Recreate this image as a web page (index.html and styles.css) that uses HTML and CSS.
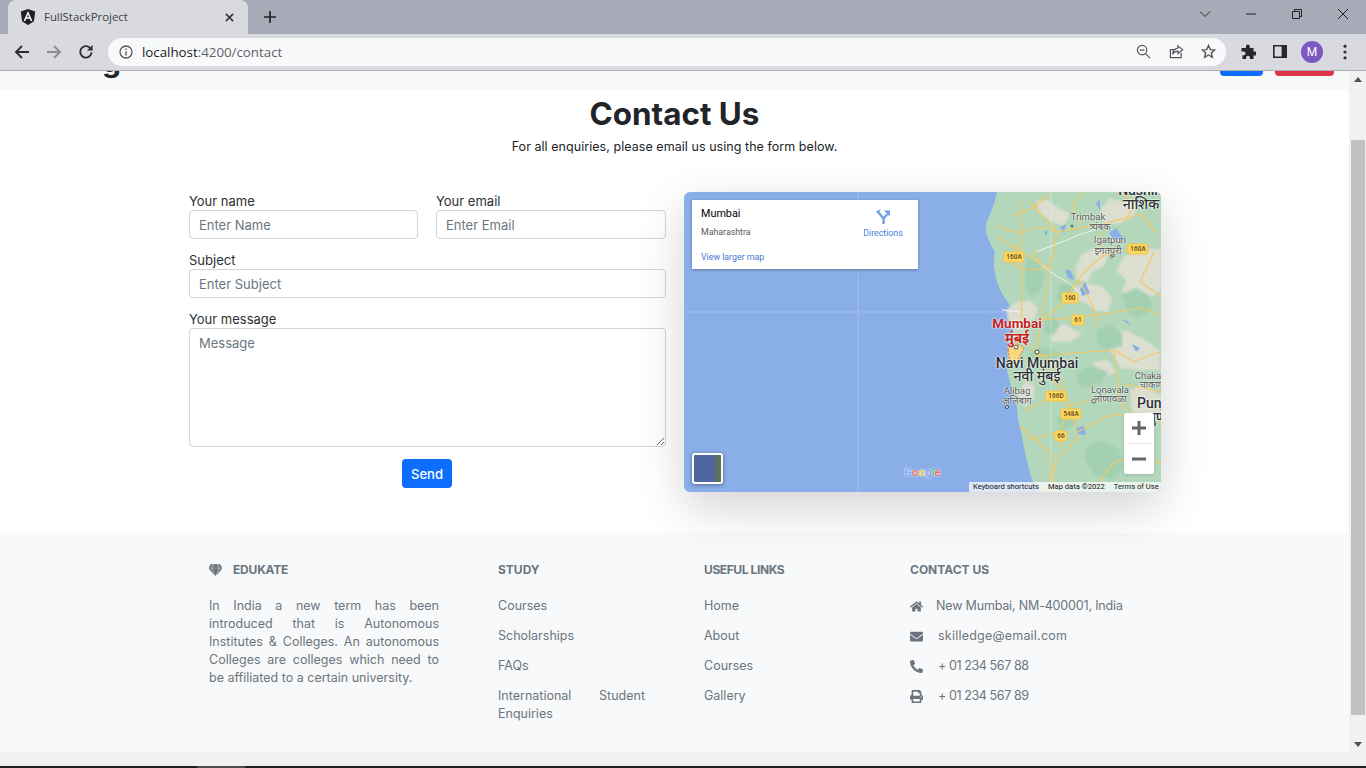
FILE: index.html
```html
<!DOCTYPE html>
<html lang="en">
<head>
<meta charset="utf-8">
<title>FullStackProject</title>
<link rel="stylesheet" href="styles.css">
</head>
<body>
<div class="browser">
  <header class="tabstrip">
    <div class="tab">
      <svg class="favicon" viewBox="0 0 16 16"><path class="fav-shield" d="M8 0 15.2 2.6 14 12.3 8 16 2 12.3.8 2.6z"/><path class="fav-a" d="M8 2 3.6 12h1.7l.9-2.3h3.6l.9 2.3h1.7zM6.9 8.3 8 5.4l1.1 2.9z"/></svg>
      <span class="tab-title">FullStackProject</span>
      <svg class="tab-close" viewBox="0 0 10 10"><path d="M1 1 9 9M9 1 1 9"/></svg>
    </div>
    <svg class="newtab" viewBox="0 0 12 12"><path d="M6 0V12M0 6H12"/></svg>
    <div class="winctl">
      <svg class="win win-chev" viewBox="0 0 12 12"><path d="M1 3.5 6 8.5 11 3.5"/></svg>
      <svg class="win win-min" viewBox="0 0 12 12"><path d="M1 6H11"/></svg>
      <svg class="win win-max" viewBox="0 0 12 12"><path d="M1.5 3.5H8.5V10.5H1.5zM3.5 3.5V1.5H10.5V8.5H8.5"/></svg>
      <svg class="win win-close" viewBox="0 0 12 12"><path d="M1 1 11 11M11 1 1 11"/></svg>
    </div>
  </header>
  <nav class="toolbar">
    <svg class="nav nav-back" viewBox="0 0 16 16"><path d="M15 8H2M8 2 2 8l6 6"/></svg>
    <svg class="nav nav-fwd" viewBox="0 0 16 16"><path d="M1 8H14M8 2l6 6-6 6"/></svg>
    <svg class="nav nav-reload" viewBox="0 0 16 16"><path d="M13.6 8.4A5.7 5.7 0 1 1 12 3.9"/><path class="solid" d="M14.6 1v5.6H9z"/></svg>
    <div class="omnibox">
      <svg class="omni-info" viewBox="0 0 14 14"><circle cx="7" cy="7" r="6"/><path d="M7 6.2V10.4M7 3.6V5"/></svg>
      <span class="url">localhost<span class="url-dim">:4200/contact</span></span>
      <svg class="omni omni-zoom" viewBox="0 0 16 16"><circle cx="6.5" cy="6.5" r="5"/><path d="M10.2 10.2 15 15M4 6.5H9"/></svg>
      <svg class="omni omni-share" viewBox="0 0 16 16"><path d="M13 9.5V14.5H1.5V6H5M9.5 2 14.5 6 9.5 10V7.6C7 7.6 5.2 8.6 4 11 4.2 7.4 6 4.8 9.5 4.4z"/></svg>
      <svg class="omni omni-star" viewBox="0 0 16 16"><path d="M8 1.6 9.9 6l4.7.4-3.6 3.1 1.1 4.7L8 11.7l-4.1 2.5L5 9.5 1.4 6.4 6.1 6z"/></svg>
    </div>
    <svg class="ext" viewBox="0 0 16 16"><path d="M6 2.5a1.9 1.9 0 0 1 3.8 0V4H13.5V7.6H15a1.9 1.9 0 0 1 0 3.8H13.5V15H9.9V13.6a1.9 1.9 0 0 0-3.8 0V15H2.5V11.2H3.7a1.9 1.9 0 0 0 0-3.8H1.5V4H6z"/></svg>
    <svg class="panel" viewBox="0 0 14 13"><path d="M0 0H14V13H0zM1.6 1.6V11.4H8.6V1.6z"/></svg>
    <div class="avatar">M</div>
    <svg class="menu" viewBox="0 0 4 16"><circle cx="2" cy="2.2" r="1.6"/><circle cx="2" cy="8" r="1.6"/><circle cx="2" cy="13.8" r="1.6"/></svg>
  </nav>
  <div class="viewport">
    <div class="page-row">
      <main class="page">
        <div class="site-nav">
          <span class="brand">g</span>
          <div class="nav-btns"><span class="nav-btn blue"></span><span class="nav-btn red"></span></div>
        </div>
        <section class="contact">
          <h1 class="title">Contact Us</h1>
          <p class="lead">For all enquiries, please email us using the form below.</p>
          <div class="contact-row">
            <form class="form">
              <div class="field"><label class="label">Your name</label><input class="control" placeholder="Enter Name"></div>
              <div class="field"><label class="label">Your email</label><input class="control" placeholder="Enter Email"></div>
              <div class="field wide"><label class="label">Subject</label><input class="control" placeholder="Enter Subject"></div>
              <div class="field wide"><label class="label">Your message</label><textarea class="control area" placeholder="Message"></textarea></div>
              <div class="wide actions"><button type="button" class="send">Send</button></div>
            </form>
            <div class="map">
              <svg class="map-svg" viewBox="0 0 477 300">
                <rect class="sea" width="477" height="300"/>
                <path class="grid-line" d="M174 0V300M0 120H320"/>
                <path class="land" d="M313 0C310 14 306 22 302 32 300 40 306 52 311 60 308 72 312 84 313 90 316 98 318 102 321 106 326 114 330 120 333 126 330 136 328 142 326 148 322 160 324 170 323 178 326 192 330 204 333 215 334 224 334 230 336 235 340 258 344 274 348 288L356 300H477V0z"/>
                <g class="tan">
                  <path d="M352 8 364 8 374 16 386 22 380 34 368 30 356 22z"/>
                  <path d="M426 6 440 10 454 12 450 24 436 32 420 32 416 18z"/>
                  <path d="M398 62 412 56 426 60 420 74 408 80 404 90 392 88 392 74z"/>
                  <path d="M440 64 456 58 477 56V98L464 108 450 110 438 100 442 88 432 78z"/>
                  <path d="M390 96 404 92 418 94 428 106 424 120 410 118 400 110 388 108z"/>
                  <path d="M322 118 332 110 346 108 354 116 350 128 340 128 336 140 326 136z"/>
                  <path d="M366 136 380 132 398 142 386 150 368 150z"/>
                  <path d="M426 142 442 138 458 146 476 158V178L456 178 436 176 430 164 420 150z"/>
                  <path d="M340 190 350 192 350 206 340 214 334 206z"/>
                  <path d="M446 198 458 192 477 204V224L462 228 448 220z"/>
                  <path d="M410 170 424 168 432 180 418 186 408 180z"/>
                </g>
                <g class="deep">
                  <path d="M342 66 354 68 360 84 356 100 346 104 340 90z"/>
                  <path d="M376 92 388 92 390 104 378 112 372 106z"/>
                  <path d="M438 102 452 96 466 104 468 118 454 126 444 120z"/>
                  <path d="M414 138 426 132 438 142 438 154 422 158 412 150z"/>
                  <path d="M360 130 370 124 376 134 368 144 360 138z"/>
                  <path d="M404 254 418 248 434 256 442 274 428 288 410 282 400 266z"/>
                  <path d="M392 182 408 174 424 180 416 192 396 196z"/>
                  <path d="M372 226 384 220 392 232 378 242z"/>
                  <path d="M344 162 358 154 378 162 360 172 350 170z"/>
                </g>
                <g class="lake">
                  <path d="M376 35 382 32 380 42z"/>
                  <path d="M425 41 432 36 440 47 430 48z"/>
                  <path d="M396 97 401 90 406 101 398 104z"/>
                  <path d="M381 77 387 79 390 88 384 86z"/>
                  <path d="M412 11 416 7 416 19z"/>
                  <path d="M392 236 400 234 402 243 394 242z"/>
                  <path d="M437 127 444 129 446 133z"/>
                  <path d="M448 152 456 156 452 160z"/>
                  <path d="M360 40 364 38 362 44z"/>
                </g>
                <path class="grid-faint" d="M367 0V300"/>
                <g class="road-white">
                  <path d="M352 60C366 54 380 50 392 44 402 40 412 38 416 36M352 68C360 74 368 82 376 86 384 90 390 94 392 98M330 128 342 142M318 118 336 120"/>
                </g>
                <g class="road">
                  <path d="M366 76 358 126"/>
                  <path d="M373 40C370 56 368 66 366 76 348 68 330 56 313 44M373 40C390 36 404 36 420 32 432 28 446 26 456 22 464 28 468 34 470 40"/>
                  <path d="M336 6C340 40 336 90 338 126M313 34C322 38 332 42 340 40 346 34 362 34 373 40"/>
                  <path d="M359 128C390 126 424 122 456 116 464 118 470 120 477 124M359 128C366 122 374 116 380 110 384 102 390 94 394 88 402 78 410 70 419 64 428 60 436 60 445 58"/>
                  <path d="M419 64C418 56 416 48 416 40M394 88C400 96 404 104 408 112 410 120 412 128 414 134"/>
                  <path d="M346 10 373 40M330 52 338 66M350 60 356 72M330 24 352 14 364 2M398 0 388 14 398 32"/>
                  <path d="M320 66C328 72 336 76 342 78 350 78 358 76 366 76"/>
                  <path d="M345 152C356 168 366 182 376 198 384 214 390 230 394 244 386 254 378 262 372 270 370 282 368 290 366 300"/>
                  <path d="M358 126C356 138 354 148 352 158 358 164 364 168 370 174 376 188 382 200 386 214 392 212 400 210 406 208"/>
                  <path d="M386 214 376 240 378 258M376 240 344 248M394 240C406 232 418 226 430 222 446 224 462 226 477 230"/>
                  <path d="M372 204 340 218M352 164C378 162 404 160 430 158 438 162 444 166 450 170 458 166 468 162 477 160"/>
                  <path d="M336 234C346 244 358 254 368 262 368 272 366 282 366 290M440 192 477 200M430 158C432 176 434 192 436 210 448 224 460 238 470 250M410 296 430 270 456 262 477 272M438 0 450 14 440 30M470 60 456 90 477 104"/>
                </g>
                <path class="city" d="M324 158 331 150 340 156 332 172 326 170z"/>
                <g class="stroke-dots">
                  <circle cx="332" cy="155" r="2"/><circle cx="353" cy="160" r="2"/><circle cx="410" cy="209" r="2"/><circle cx="323" cy="215" r="1.5"/><circle cx="455" cy="12" r="2"/><circle cx="428" cy="64" r="1.5"/><circle cx="388" cy="34" r="1"/><circle cx="456" cy="232" r="1.5"/>
                </g>
              </svg>
              <span class="pl pl-sm pl-trimbak">Trimbak</span>
              <span class="pl pl-sm pl-trimbak2">त्र्यंबक</span>
              <span class="pl pl-sm pl-igat">Igatpuri</span>
              <span class="pl pl-sm pl-igat2">इगतपुरी</span>
              <span class="pl pl-lg pl-nashik">Nashik</span>
              <span class="pl pl-lg pl-nashik2">नाशिक</span>
              <span class="pl pl-red pl-mumbai">Mumbai</span>
              <span class="pl pl-red pl-mumbai2">मुंबई</span>
              <span class="pl pl-lg pl-navi">Navi Mumbai</span>
              <span class="pl pl-lg pl-navi2">नवी मुंबई</span>
              <span class="pl pl-sm pl-alibag">Alibag</span>
              <span class="pl pl-sm pl-alibag2">अलिबाग</span>
              <span class="pl pl-sm pl-lona">Lonavala</span>
              <span class="pl pl-sm pl-lona2">लोणावळा</span>
              <span class="pl pl-sm pl-chaka">Chaka</span>
              <span class="pl pl-sm pl-chaka2">चाकण</span>
              <span class="pl pl-lg pl-pune">Pune</span>
              <span class="pl pl-lg pl-pune2">पुणे</span>
              <span class="shield s1">160A</span>
              <span class="shield s2">160</span>
              <span class="shield s3">61</span>
              <span class="shield s4">160A</span>
              <span class="shield s5">166D</span>
              <span class="shield s6">548A</span>
              <span class="shield s7">66</span>
              <div class="infocard">
                <div class="info-left">
                  <div class="info-name">Mumbai</div>
                  <div class="info-region">Maharashtra</div>
                  <div class="info-link">View larger map</div>
                </div>
                <div class="info-dir">
                  <svg class="dir-icon" viewBox="0 0 14 15"><path d="M7.5 15V9.5L2.5 3.5M7.5 9.5 11.5 5"/><path class="solid" d="M8 1.5H14V7.5zM0 2 5 .5 2 5z"/></svg>
                  <span>Directions</span>
                </div>
              </div>
              <div class="thumb"><span class="thumb-land"></span></div>
              <div class="google"><span class="g-b">G</span><span class="g-r">o</span><span class="g-y">o</span><span class="g-b">g</span><span class="g-g">l</span><span class="g-r">e</span></div>
              <div class="zoomctl">
                <svg class="zoom-btn" viewBox="0 0 30 30"><path d="M8 15H22M15 8V22"/></svg>
                <span class="zoom-div"></span>
                <svg class="zoom-btn" viewBox="0 0 30 30"><path d="M8 15H22"/></svg>
              </div>
              <div class="attrib"><span>Keyboard shortcuts</span><span>Map data ©2022</span><span>Terms of Use</span></div>
            </div>
          </div>
        </section>
        <footer class="footer">
          <div class="foot-col">
            <h2 class="foot-h brand-h"><svg class="gem" viewBox="0 0 576 512"><path d="M485.5 0L576 160H474.9L405.7 0h79.8zm-128 0l69.2 160H149.3L218.5 0h139zm-267 0h79.8l-69.2 160H0L90.5 0zM0 192h100.7l123 251.7c1.5 3.1-2.7 5.9-5 3.3L0 192zm148.2 0h279.6l-137 318.2c-1 2.4-4.5 2.4-5.5 0L148.2 192zm204.1 251.7l123-251.7H576L357.3 446.9c-2.3 2.7-6.5-.1-5-3.2z"/></svg>EDUKATE</h2>
            <p class="foot-p">In India a new term has been introduced that is Autonomous Institutes &amp; Colleges. An autonomous Colleges are colleges which need to be affiliated to a certain university.</p>
          </div>
          <div class="foot-col">
            <h2 class="foot-h">STUDY</h2>
            <ul class="foot-list study">
              <li>Courses</li><li>Scholarships</li><li>FAQs</li><li>International Student Enquiries</li>
            </ul>
          </div>
          <div class="foot-col">
            <h2 class="foot-h narrow">USEFUL LINKS</h2>
            <ul class="foot-list">
              <li>Home</li><li>About</li><li>Courses</li><li>Gallery</li>
            </ul>
          </div>
          <div class="foot-col">
            <h2 class="foot-h">CONTACT US</h2>
            <ul class="foot-list">
              <li class="ci"><svg class="ci-icon" viewBox="0 0 576 512"><path d="M280.37 148.26L96 300.11V464a16 16 0 0 0 16 16l112.06-.29a16 16 0 0 0 15.92-16V368a16 16 0 0 1 16-16h64a16 16 0 0 1 16 16v95.64a16 16 0 0 0 16 16.05L464 480a16 16 0 0 0 16-16V300L295.67 148.26a12.19 12.19 0 0 0-15.3 0zM571.6 251.47L488 182.56V44.05a12 12 0 0 0-12-12h-56a12 12 0 0 0-12 12v72.61L318.47 43a48 48 0 0 0-61 0L4.34 251.47a12 12 0 0 0-1.6 16.9l25.5 31A12 12 0 0 0 45.15 301l235.22-193.74a12.19 12.19 0 0 1 15.3 0L530.9 301a12 12 0 0 0 16.9-1.6l25.5-31a12 12 0 0 0-1.7-16.93z"/></svg><span class="ci-t addr">New Mumbai, NM-400001, India</span></li>
              <li class="ci"><svg class="ci-icon" viewBox="0 0 512 512"><path d="M502.3 190.8c3.9-3.1 9.7-.2 9.7 4.7V400c0 26.5-21.5 48-48 48H48c-26.5 0-48-21.5-48-48V195.6c0-5 5.7-7.8 9.7-4.7 22.4 17.4 52.1 39.5 154.1 113.6 21.1 15.4 56.7 47.8 92.2 47.6 35.7.3 72-32.8 92.3-47.6 102-74.1 131.6-96.3 154-113.7zM256 320c23.2.4 56.6-29.2 73.4-41.4 132.7-96.3 142.8-104.7 173.4-128.7 5.8-4.5 9.2-11.5 9.2-18.9v-19c0-26.5-21.5-48-48-48H48C21.5 64 0 85.5 0 112v19c0 7.4 3.4 14.3 9.2 18.9 30.6 23.9 40.7 32.4 173.4 128.7 16.8 12.2 50.2 41.8 73.4 41.4z"/></svg><span class="ci-t mail">skilledge@email.com</span></li>
              <li class="ci"><svg class="ci-icon" viewBox="0 0 512 512"><path d="M497.39 361.8l-112-48a24 24 0 0 0-28 6.9l-49.6 60.6A370.66 370.66 0 0 1 130.6 204.11l60.6-49.6a23.94 23.94 0 0 0 6.9-28l-48-112A24.16 24.16 0 0 0 122.6.61l-104 24A24 24 0 0 0 0 48c0 256.5 207.9 464 464 464a24 24 0 0 0 23.4-18.6l24-104a24.29 24.29 0 0 0-14.01-27.6z"/></svg><span class="ci-t tel">+ 01 234 567 88</span></li>
              <li class="ci"><svg class="ci-icon" viewBox="0 0 512 512"><path d="M448 192V77.25c0-8.49-3.37-16.62-9.37-22.63L393.37 9.37c-6-6-14.14-9.37-22.63-9.37H96C78.33 0 64 14.33 64 32v160c-35.35 0-64 28.65-64 64v112c0 8.84 7.16 16 16 16h48v96c0 17.67 14.33 32 32 32h320c17.67 0 32-14.33 32-32v-96h48c8.84 0 16-7.16 16-16V256c0-35.35-28.65-64-64-64zm-64 256H128v-96h256v96zm0-224H128V64h192v48c0 8.84 7.16 16 16 16h48v96zm48 72c-13.25 0-24-10.75-24-24 0-13.26 10.75-24 24-24s24 10.74 24 24c0 13.25-10.75 24-24 24z"/></svg><span class="ci-t tel">+ 01 234 567 89</span></li>
            </ul>
          </div>
        </footer>
      </main>
      <aside class="vscroll">
        <svg class="arrow" viewBox="0 0 10 6"><path d="M5 0 10 6H0z"/></svg>
        <div class="vtrack"><div class="vthumb"></div></div>
        <svg class="arrow" viewBox="0 0 10 6"><path d="M0 0H10L5 6z"/></svg>
      </aside>
    </div>
    <div class="hbar"></div>
  </div>
  <div class="taskline"><span class="taskline-seg"></span></div>
</div>
</body>
</html>
```

FILE: styles.css
```css
* { box-sizing: border-box; }
html, body { margin: 0; padding: 0; height: 768px; overflow: hidden; background: #fff; }
body { font-family: Inter, "Noto Sans", sans-serif; }
svg { display: block; flex: none; }
ul { list-style: none; margin: 0; padding: 0; }
.browser { width: 1366px; height: 768px; display: flex; flex-direction: column; overflow: hidden; }

/* browser chrome */
.tabstrip { height: 34px; background: #a6abb7; display: flex; align-items: center; flex: none; }
.tab { width: 240px; height: 34px; margin-left: 8px; background: #d9dadf; border-radius: 8px 8px 0 0; display: flex; align-items: center; padding: 0 12px; }
.favicon { width: 16px; height: 16px; margin-right: 8px; }
.fav-shield { fill: #1f2023; }
.fav-a { fill: #fff; }
.tab-title { font: 11.4px/16px "Open Sans", "Noto Sans", sans-serif; color: #3c4043; flex: 1; }
.tab-close { width: 9px; height: 9px; margin-right: 2px; fill: none; stroke: #35363a; stroke-width: 1.8; }
.newtab { width: 12px; height: 12px; margin-left: 16px; fill: none; stroke: #222; stroke-width: 1.7; }
.winctl { margin-left: auto; display: flex; align-items: center; height: 34px; padding-bottom: 7px; }
.win { width: 12px; height: 12px; fill: none; stroke: #222; stroke-width: 1; }
.win-chev { margin-right: 34px; stroke: #333; }
.win-min { margin-right: 34px; }
.win-max { margin-right: 34px; }
.win-close { margin-right: 17px; }

.toolbar { height: 37px; background: #d9dadf; border-bottom: 1px solid #aeafb4; display: flex; align-items: center; flex: none; padding-bottom: 1px; }
.nav { width: 16px; height: 16px; fill: none; stroke: #2b2c2f; stroke-width: 1.8; }
.nav-back { margin-left: 14px; }
.nav-fwd { margin-left: 16px; stroke: #8b8c90; }
.nav-reload { margin-left: 16px; }
.nav-reload .solid { fill: #2b2c2f; stroke: none; }
.omnibox { width: 1118px; height: 28px; margin-left: 14px; background: #f8f9fa; border-radius: 14px; display: flex; align-items: center; padding-left: 11px; }
.omni-info { width: 14px; height: 14px; fill: none; stroke: #55565a; stroke-width: 1.3; }
.url { margin-left: 9px; font: 13.3px/20px "Open Sans", "Noto Sans", sans-serif; color: #202124; flex: 1; }
.url-dim { color: #5f6368; }
.omni { width: 15px; height: 15px; fill: none; stroke: #55565a; stroke-width: 1.3; }
.omni-share { margin-left: 18px; }
.omni-star { margin-left: 17px; margin-right: 10px; stroke-width: 1.5; }
.ext { width: 16px; height: 16px; margin-left: 14px; fill: #26272a; }
.panel { width: 14px; height: 13px; margin-left: 17px; fill: #26272a; fill-rule: evenodd; }
.avatar { width: 22px; height: 22px; margin-left: 14px; border-radius: 50%; background: #7e57c2; color: #fff; font: 12px/22px Roboto, sans-serif; text-align: center; }
.menu { width: 4px; height: 16px; margin-left: 20px; fill: #333; }

/* viewport */
.viewport { height: 695px; display: flex; flex-direction: column; flex: none; }
.page-row { height: 681px; display: flex; flex: none; }
.page { width: 1349px; flex: none; height: 681px; overflow: hidden; display: flex; flex-direction: column; }
.site-nav { height: 19px; background: #f8f9fa; display: flex; flex: none; justify-content: space-between; overflow: hidden; }
.brand { margin: -28px 0 0 102px; font: 700 30px/36px Inter, sans-serif; color: #212529; }
.nav-btns { display: flex; gap: 12px; margin-right: 15px; }
.nav-btn { height: 5px; border-radius: 0 0 4px 4px; }
.blue { width: 43px; background: #0d6efd; }
.red { width: 59px; background: #dc3545; }

.contact { height: 443px; flex: none; background: #fff; display: flex; flex-direction: column; padding-top: 6px; }
.title { margin: 0; font: 700 31.4px/36px Inter, sans-serif; color: #212529; text-align: center; }
.lead { margin: 6px 0 0; font: 400 12.5px/18px Inter, sans-serif; letter-spacing: .05px; color: #212529; text-align: center; }
.contact-row { display: flex; gap: 18px; margin: 36px 0 0 189px; }
.form { width: 477px; display: grid; grid-template-columns: 229px 230px; column-gap: 18px; row-gap: 12px; align-content: start; }
.field { display: flex; flex-direction: column; }
.wide { grid-column: 1 / -1; }
.label { font: 400 13px/18px Inter, sans-serif; color: #2b2f33; }
.control { display: block; width: 100%; height: 29px; border: 1px solid #ced4da; border-radius: 4px; padding: 0 9px; font: 400 13px/18px Inter, sans-serif; color: #212529; background: #fff; outline: none; }
.control::placeholder { color: #6c757d; opacity: 1; }
.area { height: 119px; padding: 5px 9px; resize: vertical; }
.actions { display: flex; justify-content: center; padding-right: 1px; }
.send { width: 50px; height: 29px; padding: 0; border: 0; border-radius: 4px; background: #0d6efd; color: #fff; font: 500 13px/18px Inter, sans-serif; }

/* map */
.map { position: relative; width: 477px; height: 300px; border-radius: 6px; overflow: hidden; flex: none; box-shadow: 0 16px 48px rgba(0, 0, 0, .175); }
.map-svg { width: 477px; height: 300px; }
.sea { fill: #8aaee8; }
.grid-line { fill: none; stroke: #a0bcee; stroke-width: 1; }
.grid-faint { fill: none; stroke: #fff; stroke-opacity: .25; stroke-width: 1; }
.land { fill: #b3d7bb; filter: blur(.4px); }
.tan { filter: blur(.8px); }
.tan path { fill: #dcded0; }
.deep { filter: blur(.8px); }
.deep path { fill: #a2d0b0; }
.lake { filter: blur(.4px); }
.lake path { fill: #88b0e8; }
.road-white { filter: blur(.2px); }
.road-white path { fill: none; stroke: #f2f5f0; stroke-width: 1; }
.road { filter: blur(.2px); }
.road path { fill: none; stroke: #f4c766; stroke-width: 1.2; }
.city { fill: #f8d87a; stroke: #d94a3d; stroke-width: .8; stroke-dasharray: 2 1.5; }
.stroke-dots circle { fill: #fff; stroke: #444; stroke-width: 1; }

.pl { position: absolute; white-space: nowrap; font-family: Roboto, "Noto Sans", sans-serif; line-height: 12px; text-shadow: 0 0 2px #fff, 0 0 2px #fff; transform: translateX(-50%); }
.pl-sm { font-size: 9.5px; color: #555; }
.pl-lg { font-size: 14px; font-weight: 500; color: #2b2f33; }
.pl-red { font-size: 13.5px; font-weight: 700; color: #c5221f; }
.pl-trimbak { left: 404px; top: 19px; }
.pl-trimbak2 { left: 416px; top: 29px; }
.pl-igat { left: 426px; top: 42px; }
.pl-igat2 { left: 424px; top: 53px; }
.pl-nashik { left: 456px; top: -8px; }
.pl-nashik2 { left: 457px; top: 6px; }
.pl-mumbai { left: 333px; top: 125px; }
.pl-mumbai2 { left: 333px; top: 140px; }
.pl-navi { left: 353px; top: 165px; }
.pl-navi2 { left: 353px; top: 178px; }
.pl-alibag { left: 333px; top: 193px; }
.pl-alibag2 { left: 333px; top: 203px; }
.pl-lona { left: 426px; top: 192px; }
.pl-lona2 { left: 426px; top: 201px; }
.pl-chaka { left: 464px; top: 178px; }
.pl-chaka2 { left: 467px; top: 187px; }
.pl-pune { left: 469px; top: 205px; }
.pl-pune2 { left: 473px; top: 219px; }
.shield { position: absolute; transform: translate(-50%, -50%); padding: 0 2px; height: 11px; border-radius: 2px; background: #fdd663; border: 1px solid #f3c64b; font: 500 6.5px/9px Roboto, sans-serif; color: #5b4a14; }
.s1 { left: 330px; top: 65px; }
.s2 { left: 386px; top: 106px; }
.s3 { left: 394px; top: 128px; }
.s4 { left: 454px; top: 57px; }
.s5 { left: 372px; top: 204px; }
.s6 { left: 387px; top: 222px; }
.s7 { left: 377px; top: 244px; }

.infocard { position: absolute; left: 8px; top: 8px; width: 226px; height: 69px; background: #fff; box-shadow: 0 1px 3px rgba(0, 0, 0, .3); display: flex; font-family: Roboto, sans-serif; }
.info-left { padding: 7px 0 0 9px; flex: 1; }
.info-name { font: 400 10.8px/13px Roboto, sans-serif; color: #000; }
.info-region { margin-top: 6px; font: 400 8.8px/12px Roboto, sans-serif; color: #5b5b5b; }
.info-link { margin-top: 13px; font: 400 8.8px/12px Roboto, sans-serif; color: #4a76d4; }
.info-dir { width: 40px; margin: 9px 15px 0 0; display: flex; flex-direction: column; align-items: center; font: 400 8.8px/12px Roboto, sans-serif; color: #3f7fe0; }
.dir-icon { width: 14px; height: 15px; margin-bottom: 3px; fill: none; stroke: #6ea1e6; stroke-width: 2.4; }
.dir-icon .solid { fill: #6ea1e6; stroke: none; }
.thumb { position: absolute; left: 8px; top: 261px; width: 31px; height: 31px; border: 2px solid #fff; border-radius: 3px; background: #4e659f; box-shadow: 0 1px 4px rgba(0, 0, 0, .4); overflow: hidden; display: flex; justify-content: flex-end; }
.thumb-land { width: 6px; background: #5b7358; }
.google { position: absolute; left: 220px; top: 273px; font: 500 11.5px/14px Roboto, sans-serif; text-shadow: 0 0 1px #fff, 0 0 2px #fff; }
.g-b { color: #6f9df0; }
.g-r { color: #e8655a; }
.g-y { color: #f2c33a; }
.g-g { color: #4fb06c; }
.zoomctl { position: absolute; left: 440px; top: 221px; width: 30px; height: 61px; background: #fff; border-radius: 2px; display: flex; flex-direction: column; align-items: center; box-shadow: 0 1px 3px rgba(0, 0, 0, .15); }
.zoom-btn { width: 30px; height: 30px; fill: none; stroke: #666; stroke-width: 3; }
.zoom-div { width: 24px; height: 1px; background: #e6e6e6; flex: none; }
.attrib { position: absolute; left: 285px; right: 0; bottom: 0; height: 10px; display: flex; background: rgba(255, 255, 255, .72); font: 400 7.6px/10px Roboto, sans-serif; color: #111; padding-left: 4px; gap: 9px; white-space: nowrap; overflow: hidden; }

/* footer */
.footer { flex: 1; background: #f8f9fa; display: grid; grid-template-columns: 289px 206px 206px 1fr; padding: 28px 0 0 209px; color: #6c757d; }
.foot-h { margin: 0 0 18px; height: 18px; font: 700 12px/18px Inter, sans-serif; color: #6c757d; display: flex; align-items: center; }
.narrow { letter-spacing: -.4px; }
.brand-h { letter-spacing: -.2px; }
.gem { width: 13px; height: 12px; margin-right: 11px; fill: #6c757d; stroke: #6c757d; stroke-width: 26; }
.foot-p { margin: 0; width: 230px; font: 400 12.5px/18px Inter, sans-serif; text-align: justify; }
.foot-list li { margin-bottom: 12px; font: 400 12.5px/18px Inter, sans-serif; }
.study { width: 147px; text-align: justify; }
.ci { display: flex; align-items: center; }
.ci-icon { width: 13px; height: 13px; fill: #6c757d; }
.ci-t { margin-left: 15px; }
.addr { margin-left: 13px; letter-spacing: -.17px; }
.mail { letter-spacing: .22px; }
.tel { letter-spacing: -.4px; }

/* scrollbars */
.vscroll { width: 17px; background: #f1f1f1; display: flex; flex-direction: column; align-items: center; flex: none; padding: 6px 0 5px; }
.arrow { width: 8px; height: 5px; fill: #505050; flex: none; }
.vtrack { flex: 1; width: 100%; padding: 58px 1px 0 2px; }
.vthumb { height: 575px; background: #c1c1c1; }
.hbar { height: 14px; background: #f1f1f1; flex: none; }
.taskline { height: 2px; background: #202124; flex: none; padding-left: 197px; }
.taskline-seg { display: block; width: 48px; height: 2px; background: #505050; }
```
